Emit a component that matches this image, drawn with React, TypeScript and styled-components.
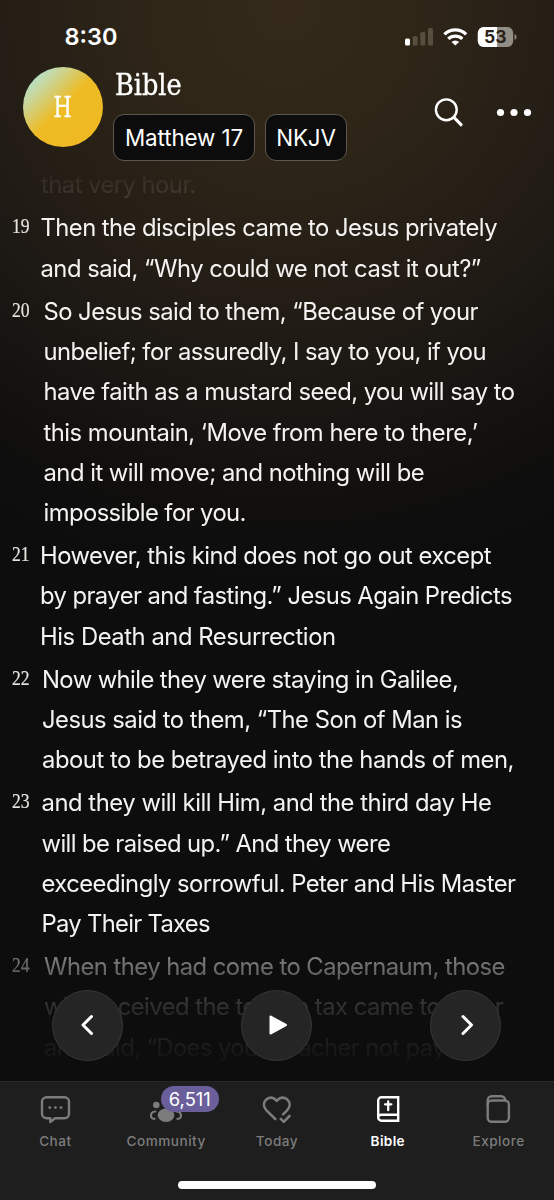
import React from "react";
import styled, { createGlobalStyle } from "styled-components";

const Global = createGlobalStyle`
  * { box-sizing: border-box; }
  body { margin: 0; background: #0d0d0d; font-family: Inter, "Liberation Sans", sans-serif; color: #fff; }
`;

const Screen = styled.div`
  position: relative;
  width: 554px;
  height: 1200px;
  display: flex;
  flex-direction: column;
  overflow: hidden;
  background: radial-gradient(ellipse 580px 570px at 285px 10px, #34291a 0%, #2f2618 22%, #261f16 45%, #1a1713 68%, #100f0e 88%, #0d0d0d 100%) #0d0d0d;
`;

const StatusBar = styled.div`
  height: 60px;
  flex: none;
  padding: 22px 37px 0 64.5px;
  display: flex;
  justify-content: space-between;
  align-items: flex-start;
`;
const Clock = styled.span`
  font-size: 23.5px;
  font-weight: 600;
  line-height: 30px;
`;
const StatusIcons = styled.svg`
  display: block;
  margin-top: 4px;
`;

const Header = styled.header`
  height: 105.4px;
  flex: none;
  padding: 7px 22px 0 22.5px;
  display: flex;
  align-items: flex-start;
`;
const Avatar = styled.div`
  width: 80px;
  height: 80px;
  border-radius: 50%;
  background: linear-gradient(135deg, #b4e2cc 12%, #c9d69a 25%, #eebb24 50%, #efb922 100%);
  display: flex;
  align-items: center;
  justify-content: center;
  font: 27px "DejaVu Serif Condensed", "DejaVu Serif", serif;
`;
const Initial = styled.span`
  transform: scaleX(0.86);
  -webkit-text-stroke: 0.3px #fff;
`;
const HeaderText = styled.div`
  margin-left: 10.5px;
  flex: 1;
`;
const Title = styled.h1`
  margin: 0 0 11px 1.5px;
  font: 400 29px/36px "DejaVu Serif Condensed", "DejaVu Serif", serif;
  -webkit-text-stroke: 0.35px #fff;
  transform: scaleX(0.98);
  transform-origin: left;
`;
const Chips = styled.div`
  display: flex;
  gap: 10px;
`;
const Chip = styled.button<{ $w: number }>`
  width: ${(p) => p.$w}px;
  height: 47px;
  padding: 0;
  border: 1.5px solid #5b5751;
  border-radius: 11px;
  background: #0c0c0c;
  color: #fff;
  font: 400 22.4px Inter, sans-serif;
  letter-spacing: -0.1px;
  white-space: nowrap;
`;
const Actions = styled.svg`
  display: block;
  margin-top: 28px;
`;

const Reader = styled.main`
  flex: 1;
  min-height: 0;
  overflow: hidden;
  display: flex;
  flex-direction: column;
  gap: 2.7px;
  padding-left: 12px;
  -webkit-mask-image: linear-gradient(to bottom, transparent 0, rgba(0,0,0,.12) 30px, rgba(0,0,0,.2) 40px, #000 51px, #000 771px, rgba(0,0,0,.5) 791px, rgba(0,0,0,.36) 811px, rgba(0,0,0,.15) 841px, rgba(0,0,0,.06) 883px, transparent 909px);
  mask-image: linear-gradient(to bottom, transparent 0, rgba(0,0,0,.12) 30px, rgba(0,0,0,.2) 40px, #000 51px, #000 771px, rgba(0,0,0,.5) 791px, rgba(0,0,0,.36) 811px, rgba(0,0,0,.15) 841px, rgba(0,0,0,.06) 883px, transparent 909px);
`;
const Verse = styled.section<{ $indent: number }>`
  flex: none;
  display: grid;
  grid-template-columns: ${(p) => p.$indent - 12}px 1fr;
`;
const VerseNumber = styled.span`
  font: 21.5px/36px "Liberation Serif", serif;
  color: #e6e4df;
  -webkit-text-stroke: 0.2px #e6e4df;
  transform: scaleX(0.82);
  transform-origin: left;
`;
const Line = styled.div<{ $ls: number }>`
  height: 40.3px;
  font-size: 23.8px;
  line-height: 40.3px;
  letter-spacing: ${(p) => p.$ls}px;
  white-space: nowrap;
  color: #f4f3f1;
`;

const Controls = styled.div`
  position: absolute;
  left: 52px;
  right: 53px;
  top: 989.5px;
  display: flex;
  justify-content: space-between;
`;
const RoundButton = styled.button`
  width: 71px;
  height: 71px;
  padding: 0;
  border-radius: 50%;
  border: 1.5px solid #373737;
  background: #252525;
  display: flex;
  align-items: center;
  justify-content: center;
`;

const TabBar = styled.nav`
  height: 119px;
  flex: none;
  background: #1e1e1e;
  border-top: 1px solid #272727;
  display: flex;
  flex-direction: column;
  align-items: center;
`;
const Tabs = styled.div`
  width: 100%;
  height: 99px;
  display: grid;
  grid-template-columns: repeat(5, 1fr);
`;
const Tab = styled.div<{ $active?: boolean }>`
  position: relative;
  display: flex;
  flex-direction: column;
  align-items: center;
  padding-top: 11px;
  color: ${(p) => (p.$active ? "#fff" : "#7c7c7c")};
  font-size: 13.6px;
  font-weight: ${(p) => (p.$active ? 600 : 500)};
  letter-spacing: ${(p) => (p.$active ? 0.35 : 0.5)}px;
`;
const TabLabel = styled.span`
  margin-top: 7px;
  line-height: 18px;
`;
const Badge = styled.span`
  position: absolute;
  left: 50px;
  top: 4px;
  width: 58px;
  height: 26px;
  border-radius: 13px;
  background: #6b5f9b;
  color: #fff;
  font-size: 18.4px;
  font-weight: 400;
  letter-spacing: 0;
  line-height: 26px;
  text-align: center;
`;
const HomeIndicator = styled.div`
  width: 198px;
  height: 8px;
  border-radius: 4px;
  background: #fff;
`;

type VerseData = { n: string; x: number; lines: [string, number][] };
const verses: VerseData[] = [
  { n: "", x: 41, lines: [["that very hour.", -0.53]] },
  { n: "19", x: 40.5, lines: [["Then the disciples came to Jesus privately", -0.55], ["and said, “Why could we not cast it out?”", -0.5]] },
  { n: "20", x: 43.5, lines: [["So Jesus said to them, “Because of your", -0.54], ["unbelief; for assuredly, I say to you, if you", -0.58], ["have faith as a mustard seed, you will say to", -0.54], ["this mountain, ‘Move from here to there,’", -0.5], ["and it will move; and nothing will be", -0.51], ["impossible for you.", -0.58]] },
  { n: "21", x: 40, lines: [["However, this kind does not go out except", -0.5], ["by prayer and fasting.” Jesus Again Predicts", -0.57], ["His Death and Resurrection", -0.45]] },
  { n: "22", x: 42, lines: [["Now while they were staying in Galilee,", -0.57], ["Jesus said to them, “The Son of Man is", -0.51], ["about to be betrayed into the hands of men,", -0.47]] },
  { n: "23", x: 41.5, lines: [["and they will kill Him, and the third day He", -0.46], ["will be raised up.” And they were", -0.59], ["exceedingly sorrowful. Peter and His Master", -0.55], ["Pay Their Taxes", -0.7]] },
  { n: "24", x: 44, lines: [["When they had come to Capernaum, those", -0.53], ["who received the temple tax came to Peter", -0.54], ["and said, “Does your Teacher not pay the", -0.6]] },
];

const stroke = { fill: "none", stroke: "currentColor", strokeWidth: 2.4, strokeLinecap: "round", strokeLinejoin: "round" } as const;

export default function App() {
  return (
    <>
      <Global />
      <Screen>
        <StatusBar>
          <Clock>8:30</Clock>
          <StatusIcons width="112" height="22" viewBox="405 26 112 22">
            <rect x="405" y="38.5" width="5" height="7" rx="1.5" fill="#fff" />
            <rect x="412.7" y="36" width="5" height="9.5" rx="1.5" fill="#574e40" />
            <rect x="420.3" y="32" width="5" height="13.5" rx="1.5" fill="#574e40" />
            <rect x="428" y="28" width="5" height="17.5" rx="1.5" fill="#574e40" />
            <g fill="none" stroke="#fff" strokeWidth="3.3">
              <path d="M444.4 34.4a15.6 15.6 0 0 1 21.8 0" />
              <path d="M448.3 38.9a10 10 0 0 1 14 0" />
            </g>
            <path d="M455.3 45.6l-3.8-3.7a5.5 5.5 0 0 1 7.6 0z" fill="#fff" />
            <rect x="477.8" y="27" width="35.4" height="20" rx="6" fill="#928d85" />
            <path d="M483.8 27H497v20h-13.2a6 6 0 0 1-6-6v-8a6 6 0 0 1 6-6z" fill="#fff" />
            <path d="M514.6 34q2 1 2 3t-2 3z" fill="#928d85" />
            <text x="484" y="43.3" fontFamily="Inter" fontWeight="700" fontSize="17.5" fill="#2b2318">53</text>
          </StatusIcons>
        </StatusBar>
        <Header>
          <Avatar><Initial>H</Initial></Avatar>
          <HeaderText>
            <Title>Bible</Title>
            <Chips>
              <Chip $w={142}>Matthew 17</Chip>
              <Chip $w={82}>NKJV</Chip>
            </Chips>
          </HeaderText>
          <Actions width="100" height="34" viewBox="432 95 100 34">
            <circle cx="446.3" cy="109.8" r="10.4" fill="none" stroke="#fff" strokeWidth="2.4" />
            <path d="M454 117.5l7 7.2" stroke="#fff" strokeWidth="3.2" strokeLinecap="round" />
            <circle cx="500.5" cy="112.5" r="3.6" fill="#fff" />
            <circle cx="514" cy="112.5" r="3.6" fill="#fff" />
            <circle cx="527.5" cy="112.5" r="3.6" fill="#fff" />
          </Actions>
        </Header>
        <Reader>
          {verses.map((v) => (
            <Verse key={v.n} $indent={v.x}>
              <VerseNumber>{v.n}</VerseNumber>
              <div>
                {v.lines.map(([text, ls]) => (
                  <Line key={text} $ls={ls}>{text}</Line>
                ))}
              </div>
            </Verse>
          ))}
        </Reader>
        <TabBar>
          <Tabs>
            <Tab>
              <svg width="32" height="32" viewBox="39 1093 32 32">
                <path {...stroke} d="M46.5 1097.2h18a4.5 4.5 0 0 1 4.5 4.5v12a4.5 4.5 0 0 1-4.5 4.5h-9.5l-4.7 3.8v-3.8h-3.8a4.5 4.5 0 0 1-4.5-4.5v-12a4.5 4.5 0 0 1 4.5-4.5z" />
                <g fill="currentColor"><circle cx="49.8" cy="1107.6" r="1.4" /><circle cx="55.4" cy="1107.6" r="1.4" /><circle cx="61" cy="1107.6" r="1.4" /></g>
              </svg>
              <TabLabel>Chat</TabLabel>
            </Tab>
            <Tab>
              <svg width="34" height="32" viewBox="149 1093 34 32">
                <g fill="currentColor">
                  <circle cx="156.3" cy="1105" r="3.3" /><circle cx="175.7" cy="1105" r="3.3" />
                  <circle cx="167" cy="1102" r="4" /><ellipse cx="166" cy="1115.3" rx="8.3" ry="6.7" />
                </g>
                <path {...stroke} strokeWidth="2.2" d="M155.3 1111.5q-4.3.3-4.3 3.9t3.6 3.5M176.7 1111.5q4.3.3 4.3 3.9t-3.6 3.5" />
              </svg>
              <TabLabel>Community</TabLabel>
              <Badge>6,511</Badge>
            </Tab>
            <Tab>
              <svg width="32" height="32" viewBox="261 1093 32 32">
                <path {...stroke} strokeWidth="2.6" d="M275.3 1119l-8.6-8.4c-3.5-3.6-3.4-8-.8-10.8 3.3-3.4 7.8-2.7 10.9 1 3.1-3.7 7.600-4.400 10.900-1 2.600 2.800 2.700 7.200-.8 10.800l-3.800 3.800" />
                <path {...stroke} strokeWidth="2.6" d="M280.8 1118.8l3 3 5.7-5.8" />
              </svg>
              <TabLabel>Today</TabLabel>
            </Tab>
            <Tab $active>
              <svg width="32" height="32" viewBox="371.5 1093 32 32">
                <path {...stroke} strokeLinejoin="miter" d="M397.7 1114.700v-17.400h-16.700a3.300 3.300 0 0 0-3.300 3.300v16.800a3.300 3.300 0 0 0 3.300 3.300h16.700v-6h-17a3 3 0 0 0-3 3" />
                <path {...stroke} strokeWidth="2.2" d="M387.7 1101.4v8.8M384.5 1104.3h6.4" />
              </svg>
              <TabLabel>Bible</TabLabel>
            </Tab>
            <Tab>
              <svg width="32" height="32" viewBox="482.7 1093 32 32">
                <rect {...stroke} x="487.4" y="1100.5" width="21.2" height="21.3" rx="4" />
                <path {...stroke} d="M487.4 1105v-4.8a4 4 0 0 1 4-4h9.5a4 4 0 0 1 4 4" />
              </svg>
              <TabLabel>Explore</TabLabel>
            </Tab>
          </Tabs>
          <HomeIndicator />
        </TabBar>
        <Controls>
          <RoundButton><svg width="24" height="24" viewBox="0 0 24 24"><path d="M15.500 3.500L7 12l8.500 8.500" fill="none" stroke="#fff" strokeWidth="3" strokeLinecap="round" strokeLinejoin="round" /></svg></RoundButton>
          <RoundButton><svg width="24" height="24" viewBox="0 0 24 24"><path d="M5.500 3.500v17L21 12z" fill="#fff" stroke="#fff" strokeWidth="2" strokeLinejoin="round" /></svg></RoundButton>
          <RoundButton><svg width="24" height="24" viewBox="0 0 24 24"><path d="M9 3.500L17.500 12l-8.500 8.500" fill="none" stroke="#fff" strokeWidth="3" strokeLinecap="round" strokeLinejoin="round" /></svg></RoundButton>
        </Controls>
      </Screen>
    </>
  );
}
